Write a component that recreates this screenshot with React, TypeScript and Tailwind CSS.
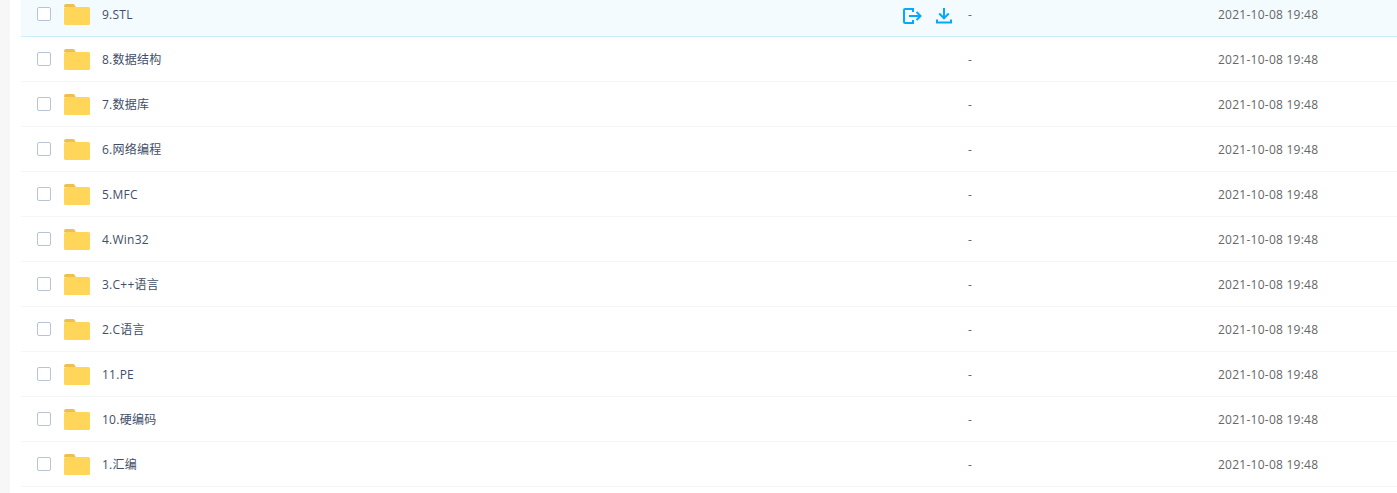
const files = [
  "9.STL",
  "8.数据结构",
  "7.数据库",
  "6.网络编程",
  "5.MFC",
  "4.Win32",
  "3.C++语言",
  "2.C语言",
  "11.PE",
  "10.硬编码",
  "1.汇编",
];

function FolderIcon() {
  return (
    <svg width="26" height="21" viewBox="0 0 26 21" className="shrink-0">
      <path d="M0 2a2 2 0 0 1 2-2h7a2 2 0 0 1 2 2l1 1H0z" fill="#edc04f" />
      <rect x="0" y="3" width="26" height="18" rx="1.5" fill="#ffd659" />
    </svg>
  );
}

function ShareIcon() {
  return (
    <svg width="19" height="16" viewBox="0 0 19 16" fill="none" stroke="#06a7ff" strokeWidth="2">
      <path d="M10 4V1H2a1 1 0 0 0-1 1v12a1 1 0 0 0 1 1h8v-3" />
      <path d="M6 8h11.5M13.5 4l4 4-4 4" />
    </svg>
  );
}

function DownloadIcon() {
  return (
    <svg width="16" height="16" viewBox="0 0 16 16" fill="none" stroke="#06a7ff" strokeWidth="2">
      <path d="M8 0v10M3.2 5.5L8 10.3l4.8-4.8" />
      <path d="M1 11.5V14.5h14v-3" />
    </svg>
  );
}

function Row({ name, active }: { name: string; active: boolean }) {
  return (
    <div
      className={
        "flex h-[45px] items-center border-b " +
        (active ? "border-[#c9eefe] bg-[#f4fbff]" : "border-[#f4f6f9] bg-white")
      }
    >
      <div className="ml-[16px] size-[14px] shrink-0 rounded-[2px] border border-[#b8c4d4] bg-white" />
      <div className="ml-[13px]">
        <FolderIcon />
      </div>
      <div className="ml-[12px] w-[801px] shrink-0 pt-[2px] text-[#424e67]">{name}</div>
      <div className="flex w-[65px] shrink-0 items-center gap-[14px] pt-[3px]">
        {active && (
          <>
            <ShareIcon />
            <DownloadIcon />
          </>
        )}
      </div>
      <div className="w-[250px] shrink-0 pt-[2px] text-[#666]">-</div>
      <div className="pt-[2px] text-[#666]">2021-10-08 19:48</div>
    </div>
  );
}

export default function App() {
  return (
    <div className="flex h-[493px] w-[1397px] overflow-hidden bg-white font-['Open_Sans','Noto_Sans_CJK_SC',sans-serif] text-[12px] tracking-[0.25px]">
      <div className="w-[10px] shrink-0 bg-[#f7f7f7]" />
      <div className="ml-[11px] mt-[-8px] flex-1">
        {files.map((name, i) => (
          <Row key={name} name={name} active={i === 0} />
        ))}
      </div>
    </div>
  );
}
